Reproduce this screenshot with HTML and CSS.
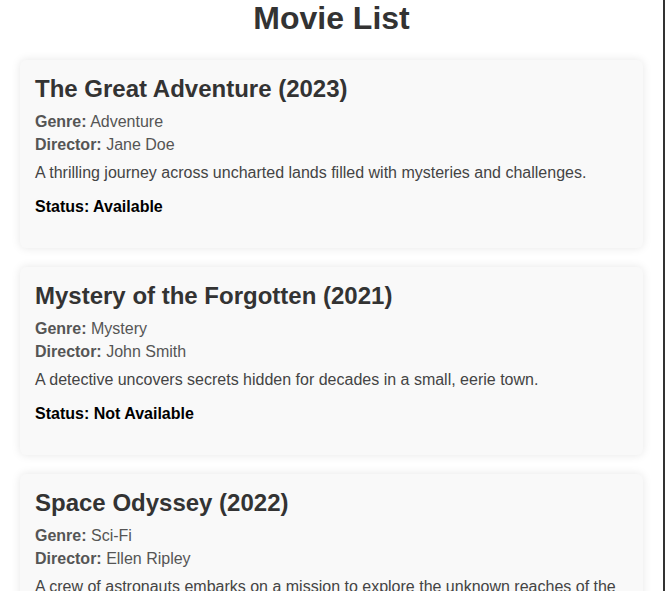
FILE: index.html
```html
<!DOCTYPE html>
<html lang="en">
<head>
<meta charset="utf-8">
<title>Movie List</title>
<link rel="stylesheet" href="styles.css">
</head>
<body>
<div class="page">
  <h1 class="page-title">Movie List</h1>
  <div class="movie">
    <h2 class="movie-title">The Great Adventure (2023)</h2>
    <p class="meta"><b>Genre:</b> Adventure</p>
    <p class="meta"><b>Director:</b> Jane Doe</p>
    <p class="desc">A thrilling journey across uncharted lands filled with mysteries and challenges.</p>
    <p class="status">Status: Available</p>
  </div>
  <div class="movie">
    <h2 class="movie-title">Mystery of the Forgotten (2021)</h2>
    <p class="meta"><b>Genre:</b> Mystery</p>
    <p class="meta"><b>Director:</b> John Smith</p>
    <p class="desc">A detective uncovers secrets hidden for decades in a small, eerie town.</p>
    <p class="status">Status: Not Available</p>
  </div>
  <div class="movie">
    <h2 class="movie-title">Space Odyssey (2022)</h2>
    <p class="meta"><b>Genre:</b> Sci-Fi</p>
    <p class="meta"><b>Director:</b> Ellen Ripley</p>
    <p class="desc">A crew of astronauts embarks on a mission to explore the unknown reaches of the galaxy.</p>
    <p class="status">Status: Available</p>
  </div>
</div>
<div class="edge"></div>
</body>
</html>
```
FILE: styles.css
```css
html, body {
  margin: 0;
  padding: 0;
  background: #fff;
}
body {
  font-family: "Liberation Sans", Arial, sans-serif;
  color: #333;
}
.page {
  width: 663px;
  box-sizing: border-box;
  padding: 0 20px 20px;
}
.page-title {
  margin: 0 0 23px;
  text-align: center;
  font-size: 32px;
  font-weight: bold;
  color: #333;
  line-height: 37px;
}
.movie {
  background: #f9f9f9;
  border-radius: 6px;
  box-shadow: 0 0 10px rgba(0, 0, 0, 0.1);
  padding: 15px 15px 15px;
  margin-bottom: 19px;
}
.movie-title {
  margin: 0 0 10px;
  font-size: 24px;
  line-height: 28px;
  color: #333;
}
.meta {
  margin: 5px 0;
  font-size: 16px;
  line-height: 18px;
  color: #555;
}
.meta b {
  color: #555;
}
.desc {
  margin: 10px 0;
  font-size: 16px;
  line-height: 18px;
  color: #444;
}
.status {
  margin: 16px 0 17px;
  font-size: 16px;
  line-height: 18px;
  font-weight: bold;
  color: #000;
}
.edge {
  position: fixed;
  top: 0;
  right: 0;
  width: 2px;
  height: 100%;
  background: #333;
}
```
